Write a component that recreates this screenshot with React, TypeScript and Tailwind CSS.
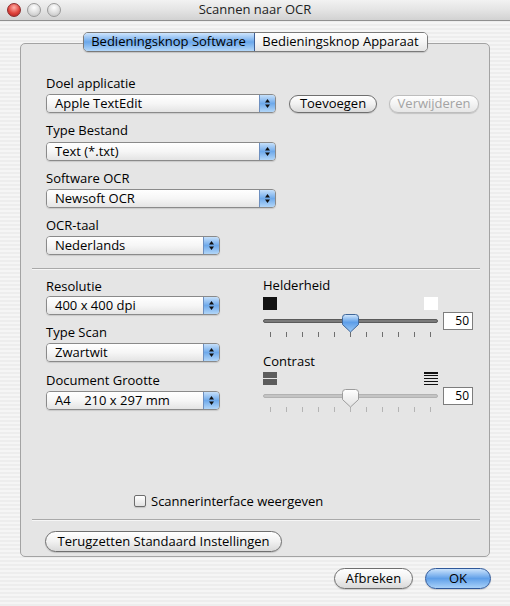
function Arrows() {
  return (
    <svg width="7" height="11" viewBox="0 0 7 11">
      <path d="M3.5 1 L6 4.5 H1 Z" fill="#111" />
      <path d="M3.5 10 L6 6.5 H1 Z" fill="#111" />
    </svg>
  )
}

function Popup({ value, className }: { value: string; className: string }) {
  return (
    <div className={`${className} h-[19px] flex rounded-[4px] border border-[#8a8a8a] overflow-hidden shadow-[0_1px_1px_rgba(0,0,0,0.12)]`}>
      <div className="flex-1 bg-gradient-to-b from-white via-[#f6f6f6] to-[#e4e4e4] pl-[8px] text-[13px] leading-[17px] text-black whitespace-pre">
        {value}
      </div>
      <div className="w-[16px] border-l border-[#6d8fbf] bg-gradient-to-b from-[#c6e0fa] via-[#6ea9ea] to-[#b2d6f8] flex items-center justify-center">
        <Arrows />
      </div>
    </div>
  )
}

function Button({ label, className, disabled, primary }: { label: string; className: string; disabled?: boolean; primary?: boolean }) {
  const tone = primary
    ? "border-[#30599a] bg-gradient-to-b from-[#cbe3fb] via-[#5f9fe8] to-[#a9d1f8] text-black"
    : disabled
      ? "border-[#bdbdbd] bg-gradient-to-b from-white via-[#f3f3f3] to-[#e6e6e6] text-[#a3a3a3]"
      : "border-[#6f6f6f] bg-gradient-to-b from-white via-[#f1f1f1] to-[#d9d9d9] text-black"
  return (
    <div className={`${className} ${tone} rounded-full border flex items-center justify-center text-[13px] shadow-[0_1px_1px_rgba(0,0,0,0.15)]`}>
      {label}
    </div>
  )
}

function Knob({ disabled }: { disabled?: boolean }) {
  const id = disabled ? "kd" : "ke"
  return (
    <svg width="17" height="19" viewBox="0 0 17 19" className="absolute left-[79px] top-[2px]">
      <defs>
        <linearGradient id={id} x1="0" y1="0" x2="0" y2="1">
          {disabled ? (
            <>
              <stop offset="0" stopColor="#ffffff" />
              <stop offset="0.5" stopColor="#f0f0f0" />
              <stop offset="1" stopColor="#e2e2e2" />
            </>
          ) : (
            <>
              <stop offset="0" stopColor="#d6eafd" />
              <stop offset="0.45" stopColor="#5d9ee9" />
              <stop offset="1" stopColor="#9dcaf6" />
            </>
          )}
        </linearGradient>
      </defs>
      <path
        d="M3.5 0.5 H13.5 Q16.5 0.5 16.5 3.5 V10.5 L8.5 18 L0.5 10.5 V3.5 Q0.5 0.5 3.5 0.5 Z"
        fill={`url(#${id})`}
        stroke={disabled ? "#9c9c9c" : "#3f6699"}
      />
    </svg>
  )
}

function Slider({ disabled }: { disabled?: boolean }) {
  return (
    <>
      <div className="mt-[2px] flex items-center h-[18px]">
        <div className="relative w-[175px] h-[18px]">
          <div
            className={`absolute left-0 right-0 top-[7px] h-[4px] rounded-full ${
              disabled ? "bg-[#c4c4c4] border border-[#b2b2b2]" : "bg-[#7a7a7a] border border-[#5a5a5a]"
            }`}
          />
          <Knob disabled={disabled} />
        </div>
        <div className="ml-[5px] w-[30px] h-[18px] border border-[#7d7d7d] bg-white text-right pr-[3px] text-[12px] leading-[16px] text-black">
          50
        </div>
      </div>
      <div className="mt-[2px] ml-[7px] w-[161px] h-[5px] flex justify-between">
        {Array.from({ length: 11 }).map((_, i) => (
          <div key={i} className={`w-px h-[5px] ${disabled ? "bg-[#b4b4b4]" : "bg-[#6e6e6e]"}`} />
        ))}
      </div>
    </>
  )
}

export default function App() {
  return (
    <div
      className="w-[510px] h-[606px] overflow-hidden bg-[repeating-linear-gradient(0deg,#ededed_0px,#ededed_2px,#f5f5f5_2px,#f5f5f5_4px)] text-black"
      style={{ fontFamily: '"Lucida Grande", "Open Sans", sans-serif' }}
    >
      {/* Title bar */}
      <div className="relative h-[21px] bg-gradient-to-b from-[#f2f2f2] via-[#e4e4e4] to-[#d2d2d2] border-b border-[#8f8f8f] flex items-center justify-center">
        <div className="absolute left-[7px] top-[3px] flex gap-[6px]">
          <div className="w-[14px] h-[14px] rounded-full border border-[#8b2a2a] bg-[radial-gradient(circle_at_50%_30%,#ffb0a8,#e0443c_55%,#a81e1e)]" />
          <div className="w-[14px] h-[14px] rounded-full border border-[#9a9a9a] bg-[radial-gradient(circle_at_50%_30%,#ffffff,#dcdcdc_55%,#bdbdbd)]" />
          <div className="w-[14px] h-[14px] rounded-full border border-[#9a9a9a] bg-[radial-gradient(circle_at_50%_30%,#ffffff,#dcdcdc_55%,#bdbdbd)]" />
        </div>
        <span className="text-[13px] text-[#222]">Scannen naar OCR</span>
      </div>

      {/* Tabs */}
      <div className="relative z-10 mt-[11px] flex justify-center">
        <div className="flex h-[20px] rounded-[5px] border border-[#7a7a7a] overflow-hidden shadow-[0_1px_1px_rgba(0,0,0,0.15)] text-[13px]">
          <div className="w-[171px] flex items-center justify-center bg-gradient-to-b from-[#cfe5fc] via-[#6aa7ea] to-[#b3d7f9] border-r border-[#3e5f96]">
            Bedieningsknop Software
          </div>
          <div className="w-[172px] flex items-center justify-center bg-gradient-to-b from-white via-[#f5f5f5] to-[#e4e4e4]">
            Bedieningsknop Apparaat
          </div>
        </div>
      </div>

      {/* Group box */}
      <div className="mx-[20px] -mt-[9px] h-[514px] rounded-[5px] border border-[#a3a3a3] bg-[#e5e5e5] flex flex-col text-[13px]">
        <div className="pl-[25px]">
          <div className="mt-[31px] h-[16px] leading-[16px]">Doel applicatie</div>
          <div className="mt-[3px] flex items-center">
            <Popup value="Apple TextEdit" className="w-[230px]" />
            <Button label="Toevoegen" className="ml-[13px] w-[88px] h-[18px]" />
            <Button label="Verwijderen" className="ml-[12px] w-[90px] h-[18px]" disabled />
          </div>
          <div className="mt-[9px] h-[16px] leading-[16px]">Type Bestand</div>
          <Popup value="Text (*.txt)" className="mt-[4px] w-[230px]" />
          <div className="mt-[9px] h-[16px] leading-[16px]">Software OCR</div>
          <Popup value="Newsoft OCR" className="mt-[3px] w-[230px]" />
          <div className="mt-[9px] h-[16px] leading-[16px]">OCR-taal</div>
          <Popup value="Nederlands" className="mt-[3px] w-[174px]" />
        </div>

        <div className="mt-[13px] ml-[11px] mr-[9px] h-[2px] border-t border-[#a9a9a9] border-b border-b-[#f6f6f6]" />

        <div className="pl-[25px] flex">
          <div className="w-[174px]">
            <div className="mt-[8px] h-[16px] leading-[16px]">Resolutie</div>
            <Popup value="400 x 400 dpi" className="mt-[2px] w-[174px]" />
            <div className="mt-[9px] h-[16px] leading-[16px]">Type Scan</div>
            <Popup value="Zwartwit" className="mt-[3px] w-[174px]" />
            <div className="mt-[10px] h-[16px] leading-[16px]">Document Grootte</div>
            <Popup value={"A4    210 x 297 mm"} className="mt-[3px] w-[174px]" />
          </div>

          <div className="ml-[43px]">
            <div className="mt-[7px] h-[16px] leading-[16px]">Helderheid</div>
            <div className="mt-[4px] w-[175px] h-[13px] flex justify-between">
              <div className="w-[14px] h-[13px] bg-[#111]" />
              <div className="w-[14px] h-[13px] bg-white" />
            </div>
            <Slider />

            <div className="mt-[16px] h-[16px] leading-[16px]">Contrast</div>
            <div className="mt-[3px] w-[175px] h-[13px] flex justify-between">
              <div className="w-[14px] h-[13px] flex flex-col justify-between">
                {Array.from({ length: 4 }).map((_, i) => (
                  <div key={i} className="h-[3px] bg-[#5c5c5c]" />
                ))}
              </div>
              <div className="w-[14px] h-[13px] flex flex-col justify-between">
                {Array.from({ length: 5 }).map((_, i) => (
                  <div key={i} className="h-[1.5px] bg-[#111]" />
                ))}
              </div>
            </div>
            <Slider disabled />
          </div>
        </div>

        <div className="mt-auto pl-[113px] h-[16px] flex items-center">
          <div className="w-[12px] h-[12px] rounded-[2px] border border-[#6d6d6d] bg-gradient-to-b from-white to-[#e2e2e2] shadow-[0_1px_1px_rgba(0,0,0,0.15)]" />
          <span className="ml-[5px] leading-[16px]">Scannerinterface weergeven</span>
        </div>
        <div className="mt-[10px] ml-[11px] mr-[9px] h-[2px] border-t border-[#a9a9a9] border-b border-b-[#f6f6f6]" />
        <Button label="Terugzetten Standaard Instellingen" className="mt-[10px] mb-[4px] ml-[24px] w-[237px] h-[21px]" />
      </div>

      {/* Dialog buttons */}
      <div className="mt-[11px] pr-[19px] flex justify-end">
        <Button label="Afbreken" className="w-[79px] h-[21px]" />
        <Button label="OK" className="ml-[12px] w-[66px] h-[21px]" primary />
      </div>
    </div>
  )
}
